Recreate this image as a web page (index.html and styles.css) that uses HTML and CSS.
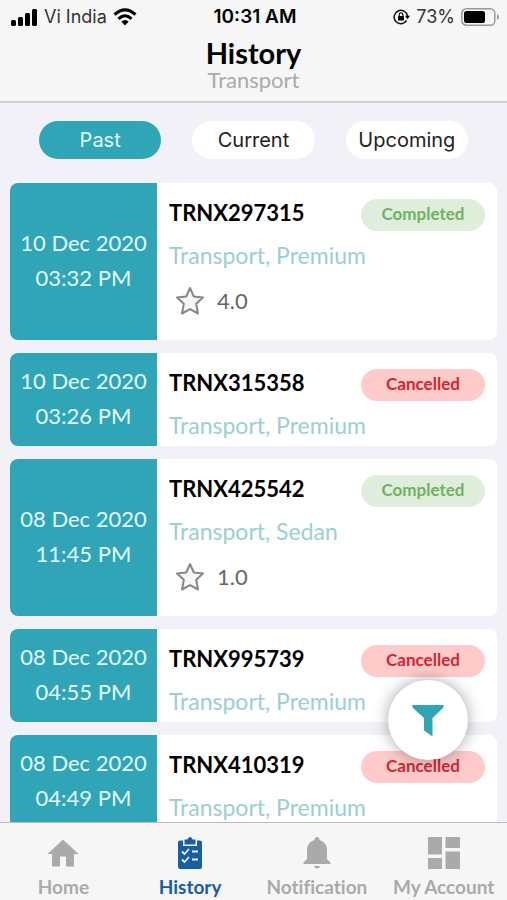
FILE: index.html
```html
<!DOCTYPE html>
<html lang="en">
<head>
<meta charset="utf-8">
<meta name="viewport" content="width=device-width, initial-scale=1">
<title>History</title>
<link rel="stylesheet" href="styles.css">
</head>
<body>
<header class="top">
  <div class="status">
    <div class="status-left">
      <svg width="27" height="17" viewBox="0 0 27 17" aria-hidden="true"><rect x="0" y="11" width="5" height="6" rx="1.5"/><rect x="7" y="8" width="5" height="9" rx="1.5"/><rect x="14" y="4" width="5" height="13" rx="1.5"/><rect x="21" y="0" width="5" height="17" rx="1.5"/></svg>
      <span class="carrier">Vi India</span>
      <svg width="24" height="18" viewBox="0 0 24 18" aria-hidden="true"><g fill="none" stroke="#000" stroke-width="3"><path d="M1.5 6.700Q12 -2.900 22.500 6.700"/><path d="M5.500 10.800Q12 4.800 18.500 10.800"/></g><path d="M12 17.500 8.300 13.600Q12 10.600 15.700 13.600Z"/></svg>
    </div>
    <span class="clock">10:31 AM</span>
    <div class="status-right">
      <svg width="17" height="16" viewBox="0 0 17 16" aria-hidden="true"><path d="M13.600 11.500A6.700 6.700 0 1 1 14.500 7" fill="none" stroke="#111" stroke-width="1.500"/><path d="M12 6.800h5l-2.500 3.400z"/><rect x="5" y="7" width="6" height="4.500" rx=".6"/><path d="M6.200 7V5.600a1.800 1.800 0 0 1 3.600 0V7" fill="none" stroke="#111" stroke-width="1.200"/></svg>
      <span class="percent">73%</span>
      <svg width="38" height="18" viewBox="0 0 38 18" aria-hidden="true"><rect x=".8" y=".8" width="33" height="16.400" rx="4.500" fill="none" stroke="#999" stroke-width="1.500"/><rect x="3" y="3" width="21" height="12" rx="2.500"/><path d="M36 6v6q2-1 2-3t-2-3z" fill="#999"/></svg>
    </div>
  </div>
  <h1 class="title">History</h1>
  <p class="subtitle">Transport</p>
</header>

<main class="content">
  <div class="tabs">
    <button class="tab tab-active" type="button">Past</button>
    <button class="tab" type="button">Current</button>
    <button class="tab" type="button">Upcoming</button>
  </div>
  <div class="list">
    <article class="card">
      <div class="when"><span>10 Dec 2020</span><span>03:32 PM</span></div>
      <div class="info">
        <div class="row"><h2 class="code">TRNX297315</h2><span class="badge completed">Completed</span></div>
        <p class="kind">Transport, Premium</p>
        <div class="rating"><svg class="star" viewBox="0 0 30 30" aria-hidden="true"><path d="M15 2 18.800 10.500 28 11.500 21.200 17.800 23 27.500 15 23.200 7 27.500 8.800 17.800 2 11.500 11.200 10.500Z"/></svg><span>4.0</span></div>
      </div>
    </article>
    <article class="card">
      <div class="when"><span>10 Dec 2020</span><span>03:26 PM</span></div>
      <div class="info">
        <div class="row"><h2 class="code">TRNX315358</h2><span class="badge cancelled">Cancelled</span></div>
        <p class="kind">Transport, Premium</p>
      </div>
    </article>
    <article class="card">
      <div class="when"><span>08 Dec 2020</span><span>11:45 PM</span></div>
      <div class="info">
        <div class="row"><h2 class="code">TRNX425542</h2><span class="badge completed">Completed</span></div>
        <p class="kind">Transport, Sedan</p>
        <div class="rating"><svg class="star" viewBox="0 0 30 30" aria-hidden="true"><path d="M15 2 18.800 10.500 28 11.500 21.200 17.800 23 27.500 15 23.200 7 27.500 8.800 17.800 2 11.500 11.200 10.500Z"/></svg><span>1.0</span></div>
      </div>
    </article>
    <article class="card">
      <div class="when"><span>08 Dec 2020</span><span>04:55 PM</span></div>
      <div class="info">
        <div class="row"><h2 class="code">TRNX995739</h2><span class="badge cancelled">Cancelled</span></div>
        <p class="kind">Transport, Premium</p>
      </div>
    </article>
    <article class="card">
      <div class="when"><span>08 Dec 2020</span><span>04:49 PM</span></div>
      <div class="info">
        <div class="row"><h2 class="code">TRNX410319</h2><span class="badge cancelled">Cancelled</span></div>
        <p class="kind">Transport, Premium</p>
      </div>
    </article>
  </div>
  <button class="filter" type="button" aria-label="Filter">
    <svg width="32" height="33" viewBox="0 0 32 33" aria-hidden="true"><path d="M.5 1H31.500V3.500L20.500 14V32.500L12 26.500V14L.5 3.500Z" fill="#2fa5b7"/></svg>
  </button>
</main>

<nav class="nav">
  <a class="nav-item" href="#home">
    <svg class="nav-icon" viewBox="0 0 32 32" aria-hidden="true"><path d="M16 2.500 31.500 17H27V29.500H19V19.500H13V29.500H5V17H.5Z"/></svg>
    <span>Home</span>
  </a>
  <a class="nav-item nav-current" href="#history" aria-current="page">
    <svg class="nav-icon" viewBox="0 0 32 32" aria-hidden="true"><path d="M6 3.500H9V9H23V3.500H26Q28 3.500 28 5.500V29.500Q28 32 26 32H6Q4 32 4 29.500V5.500Q4 3.500 6 3.500Z"/><path d="M10.500 7.500V2.500H13.500Q14 0 16 0T18.500 2.500H21.500V7.500Z"/><g fill="none" stroke="#f6f6f6" stroke-width="1.800"><path d="M8 14.500 10.500 17 15 12M18 14.500H24M8 22.500 10.500 25 15 20M18 22.500H24"/></g></svg>
    <span>History</span>
  </a>
  <a class="nav-item" href="#notification">
    <svg class="nav-icon" viewBox="0 0 32 32" aria-hidden="true"><path d="M16 0Q18.500 0 18.500 3Q26 5.500 26 13V22L29.500 25.500V27H2.500V25.500L6 22V13Q6 5.500 13.500 3Q13.500 0 16 0Z"/><path d="M13 29H19Q18.500 31.500 16 31.500T13 29Z"/></svg>
    <span>Notification</span>
  </a>
  <a class="nav-item" href="#account">
    <svg class="nav-icon" viewBox="0 0 32 32" aria-hidden="true"><path d="M0 0H14V17.500H0ZM0 21H14V32H0ZM17.500 0H32V11H17.500ZM17.500 14.500H32V32H17.500Z"/></svg>
    <span>My Account</span>
  </a>
</nav>
</body>
</html>
```

FILE: styles.css
```css
* {
  box-sizing: border-box;
}

body {
  margin: 0;
  height: 100vh;
  display: flex;
  flex-direction: column;
  background: #f1f1f7;
  color: #000;
  font-family: Lato, "Liberation Sans", sans-serif;
  font-variant-ligatures: none;
}

h1, h2, p {
  margin: 0;
}

.top {
  flex: none;
  background: #f6f6f6;
  border-bottom: 2px solid #d0d0d3;
  text-align: center;
  padding-bottom: 11px;
}

.status {
  display: grid;
  grid-template-columns: 1fr auto 1fr;
  align-items: center;
  height: 34px;
  padding: 0 8px 0 11px;
  font: 18px/24px Inter, "Liberation Sans", sans-serif;
}

.status-left,
.status-right {
  display: flex;
  align-items: center;
  gap: 6px;
}

.status-right {
  justify-content: flex-end;
}

.carrier,
.percent {
  color: #333;
}

.clock {
  font-size: 19px;
  font-weight: 600;
}

.title {
  font-size: 29px;
  line-height: 34px;
  font-weight: 700;
  padding-top: 2px;
}

.subtitle {
  color: #aaa;
  font-size: 22px;
  line-height: 20px;
}

.content {
  flex: 1;
  min-height: 0;
  position: relative;
  display: flex;
  flex-direction: column;
}

.tabs {
  flex: none;
  display: grid;
  grid-template-columns: repeat(3, 1fr);
  gap: 31px;
  padding: 18px 39px 24px;
}

.tab {
  height: 38px;
  padding: 0;
  border: 0;
  border-radius: 19px;
  background: #fff;
  color: #222;
  font: 20px/24px Inter, "Liberation Sans", sans-serif;
}

.tab-active {
  background: #2fa5b7;
  color: #e2fbfd;
}

.list {
  flex: 1;
  min-height: 0;
  overflow-y: auto;
  scrollbar-width: none;
  padding: 0 10px;
}

.card {
  display: flex;
  margin-bottom: 13px;
  border-radius: 8px;
  overflow: hidden;
  background: #fff;
}

.when {
  flex: none;
  width: 147px;
  padding-bottom: 4px;
  display: flex;
  flex-direction: column;
  align-items: center;
  justify-content: center;
  background: #2fa5b7;
  color: #e2fbfd;
  font-size: 22px;
  line-height: 35px;
}

.info {
  flex: 1;
  padding: 16px 12px 6px;
}

.row {
  display: flex;
  justify-content: space-between;
  height: 41px;
}

.code {
  font-size: 22px;
  line-height: 28px;
  font-weight: 700;
}

.badge {
  width: 124px;
  height: 32px;
  border-radius: 16px;
  text-align: center;
  font-size: 17px;
  line-height: 30px;
  font-weight: 700;
}

.completed {
  background: #dfeedb;
  color: #72b063;
}

.cancelled {
  background: #ffcaca;
  color: #d22630;
}

.kind {
  color: #9bcfd1;
  font-size: 23px;
  line-height: 30px;
}

.rating {
  display: flex;
  align-items: center;
  gap: 12px;
  padding: 16px 0 18px 6px;
  color: #666;
  font-size: 22px;
  line-height: 30px;
}

.star {
  width: 30px;
  height: 30px;
  fill: #f6f6f6;
  stroke: #888;
  stroke-width: 2;
  stroke-linejoin: round;
}

.filter {
  position: absolute;
  right: 39px;
  bottom: 62px;
  width: 80px;
  height: 80px;
  padding: 0;
  display: flex;
  align-items: center;
  justify-content: center;
  border: 0;
  border-radius: 50%;
  background: #fff;
  box-shadow: 0 0 16px rgba(0, 0, 0, 0.35);
}

.nav {
  flex: none;
  display: grid;
  grid-template-columns: repeat(4, 1fr);
  height: 78px;
  padding-top: 14px;
  border-top: 1px solid #bbb;
  background: #f6f6f6;
}

.nav-item {
  display: flex;
  flex-direction: column;
  align-items: center;
  gap: 5px;
  color: #aaa;
  font-size: 19px;
  line-height: 26px;
  font-weight: 700;
  text-decoration: none;
  white-space: nowrap;
}

.nav-icon {
  width: 32px;
  height: 32px;
  fill: currentColor;
}

.nav-current {
  color: #185ea5;
}
```
